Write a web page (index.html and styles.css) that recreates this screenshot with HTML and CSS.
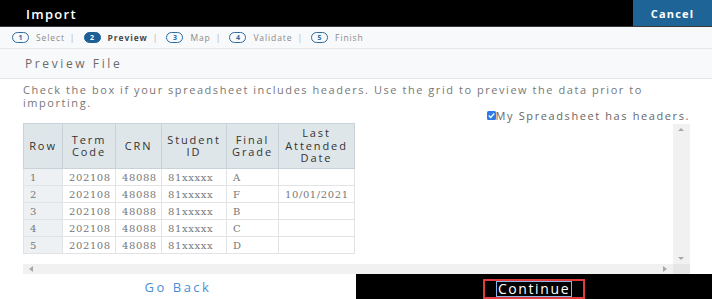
FILE: index.html
```html
<!DOCTYPE html>
<html lang="en">
<head>
<meta charset="utf-8">
<title>Import</title>
<link rel="stylesheet" href="styles.css">
</head>
<body>
<div class="app">
  <header class="topbar">
    <div class="title">Import</div>
    <button class="cancel">Cancel</button>
  </header>
  <nav class="steps">
    <span class="step"><span class="pill">1</span><span class="label">Select</span></span>
    <span class="sep">|</span>
    <span class="step active"><span class="pill">2</span><span class="label">Preview</span></span>
    <span class="sep">|</span>
    <span class="step"><span class="pill">3</span><span class="label">Map</span></span>
    <span class="sep">|</span>
    <span class="step"><span class="pill">4</span><span class="label">Validate</span></span>
    <span class="sep">|</span>
    <span class="step"><span class="pill">5</span><span class="label">Finish</span></span>
  </nav>
  <div class="section-title">Preview File</div>
  <main class="content">
    <p class="intro">Check the box if your spreadsheet includes headers. Use the grid to preview the data prior to importing.</p>
    <label class="hdr-check"><span class="cb"><svg width="9" height="9" viewBox="0 0 9 9"><path d="M1.8 4.6 L3.7 6.4 L7.3 2.6" fill="none" stroke="#fff" stroke-width="1.4"/></svg></span>My Spreadsheet has headers.</label>
    <div class="grid-wrap">
      <div class="viewport">
        <table class="data">
          <colgroup>
            <col class="c-row"><col class="c-term"><col class="c-crn"><col class="c-sid"><col class="c-grade"><col class="c-date">
          </colgroup>
          <thead>
            <tr><th>Row</th><th>Term<br>Code</th><th>CRN</th><th>Student<br>ID</th><th>Final<br>Grade</th><th>Last<br>Attended<br>Date</th></tr>
          </thead>
          <tbody>
            <tr><td class="rn">1</td><td>202108</td><td>48088</td><td>81xxxxx</td><td>A</td><td></td></tr>
            <tr><td class="rn">2</td><td>202108</td><td>48088</td><td>81xxxxx</td><td>F</td><td>10/01/2021</td></tr>
            <tr><td class="rn">3</td><td>202108</td><td>48088</td><td>81xxxxx</td><td>B</td><td></td></tr>
            <tr><td class="rn">4</td><td>202108</td><td>48088</td><td>81xxxxx</td><td>C</td><td></td></tr>
            <tr><td class="rn">5</td><td>202108</td><td>48088</td><td>81xxxxx</td><td>D</td><td></td></tr>
          </tbody>
        </table>
      </div>
      <div class="vbar"><span class="arr up"></span><span class="arr down"></span></div>
      <div class="hbar"><span class="arr left"></span><span class="arr right"></span></div>
      <div class="corner"></div>
    </div>
  </main>
  <footer class="footer">
    <button class="back">Go Back</button>
    <div class="cont-wrap"><button class="continue"><span class="focus">Continue</span></button></div>
  </footer>
</div>
</body>
</html>
```
FILE: styles.css
```css
* { box-sizing: border-box; }
html, body { margin: 0; padding: 0; background: #fff; }
body { font-family: "Open Sans", "Liberation Sans", sans-serif; }
.app { width: 712px; height: 299px; display: flex; flex-direction: column; overflow: hidden; }

.topbar { height: 27px; background: #000; border-bottom: 1px solid #3a3a3a; display: flex; align-items: stretch; justify-content: space-between; flex: none; }
.title { color: #fff; font-size: 13px; font-weight: 600; letter-spacing: 1.3px; padding-left: 26px; line-height: 28px; }
.cancel { width: 79px; height: 26px; border: 0; margin: 0; padding: 0; background: #1e6496; color: #fff; font-family: "Open Sans", sans-serif; font-size: 11px; font-weight: 700; letter-spacing: 1.2px; }

.steps { height: 22px; flex: none; background: #f8f9fb; border-bottom: 1px solid #e3e6ea; display: flex; align-items: center; padding-left: 12px; font-size: 8.5px; color: #8a8a8a; letter-spacing: 0.9px; }
.step { display: inline-flex; align-items: center; gap: 7px; }
.pill { width: 17px; height: 11px; border: 1.3px solid #2c6ca2; border-radius: 6px; color: #2c6ca2; font-size: 7px; font-weight: 700; display: inline-flex; align-items: center; justify-content: center; letter-spacing: 0; }
.step.active .pill { background: #1f5e94; border-color: #1f5e94; color: #fff; }
.step.active .label { font-weight: 700; color: #4a4a4a; }
.sep { color: #b0b0b0; margin: 0 9px 0 5px; letter-spacing: 0; }

.section-title { height: 30px; flex: none; background: #f8f9fb; border-bottom: 1px solid #e3e6ea; padding-left: 25px; color: #6b6b6b; font-size: 12px; letter-spacing: 2.6px; line-height: 29px; }

.content { flex: 1; display: flex; flex-direction: column; padding: 5px 22px 0 23px; min-height: 0; }
.intro { margin: 0; color: #777; font-size: 11px; line-height: 12.5px; letter-spacing: 1.55px; }
.hdr-check { align-self: flex-end; display: flex; align-items: center; color: #666; font-size: 11px; letter-spacing: 1.6px; line-height: 12px; margin-top: 0; height: 13px; }
.cb { width: 9px; height: 9px; background: #2a7be6; border-radius: 1.5px; display: inline-flex; margin-right: 0; }
.cb svg { display: block; }

.grid-wrap { flex: 1; margin-top: 1px; display: grid; grid-template-columns: 1fr 17px; grid-template-rows: 1fr 10px; min-height: 0; }
.viewport { overflow: hidden; background: #fff; }
.vbar { background: #f1f1f1; position: relative; margin-top: 1px; }
.hbar { background: #f1f1f1; position: relative; }
.corner { background: #e6e6e6; }
.arr { position: absolute; width: 0; height: 0; border: 3px solid transparent; }
.arr.up { left: 5px; top: 4px; border-bottom: 3px solid #a8a8a8; border-top-width: 0; border-left-width: 3.5px; border-right-width: 3.5px; }
.arr.down { left: 5px; bottom: 4px; border-top: 3px solid #a8a8a8; border-bottom-width: 0; border-left-width: 3.5px; border-right-width: 3.5px; }
.arr.left { left: 6px; top: 2px; border-right: 4px solid #a8a8a8; border-left-width: 0; }
.arr.right { right: 6px; top: 2px; border-left: 4px solid #a8a8a8; border-right-width: 0; }

.data { border-collapse: collapse; table-layout: fixed; width: 331px; }
.c-row { width: 39px; } .c-term { width: 53px; } .c-crn { width: 46px; } .c-sid { width: 65px; } .c-grade { width: 52px; } .c-date { width: 76px; }
.data th { background: #dfe6ea; border: 1px solid #c9d2d8; color: #333; font-weight: 500; font-size: 11px; letter-spacing: 1.9px; line-height: 12.5px; height: 45px; padding: 0; text-align: center; vertical-align: middle; }
.data td { height: 17px; padding: 0 0 0 6px; border: 1px solid #e1e3e5; font-family: "DejaVu Serif", "Liberation Serif", serif; font-size: 10px; letter-spacing: 0.6px; color: #777; white-space: nowrap; }
.data td.rn { background: #eef1f4; }

.footer { height: 25px; flex: none; display: flex; }
.back { width: 356px; border: 0; margin: 0; background: #fff; color: #4a8fd6; font-family: "Open Sans", sans-serif; font-size: 13px; letter-spacing: 2.5px; padding: 0; }
.cont-wrap { flex: 1; background: #000; display: flex; align-items: center; justify-content: center; }
.continue { width: 102px; height: 20px; margin-top: 4px; border: 2px solid #e23b3b; background: #000; color: #fff; padding: 0; display: flex; align-items: center; justify-content: center; font-family: "Open Sans", sans-serif; font-size: 14px; letter-spacing: 1.6px; }
.focus { border: 1px solid #8ab4e8; line-height: 14px; padding: 0 1px; }
```
